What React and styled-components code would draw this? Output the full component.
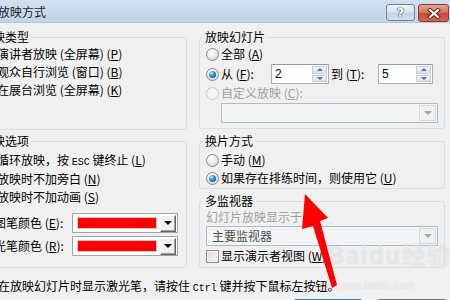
import * as React from 'react';
import styled, { createGlobalStyle } from 'styled-components';

const GlobalStyle = createGlobalStyle`
  html, body {
    margin: 0;
    padding: 0;
    background: #f0f0f0;
  }
  body {
    font-family: "Noto Sans CJK SC", "DejaVu Sans", sans-serif;
    font-size: 12px;
    color: #000;
  }
`;

const Screen = styled.div`
  position: relative;
  width: 450px;
  height: 300px;
  overflow: hidden;
  background: #f0f0f0;
`;

const Dialog = styled.div`
  width: 480px;
  margin-left: -30px;
  display: flex;
  flex-direction: column;
`;

const TitleBar = styled.div`
  height: 23px;
  box-sizing: border-box;
  display: flex;
  align-items: center;
  justify-content: space-between;
  padding: 0 1px 0 4px;
  background: linear-gradient(#d3e0f0, #c2d4ea);
  border-bottom: 1px solid #b6c7dc;
`;

const TitleText = styled.div`
  font-size: 12px;
  line-height: 14px;
  color: #1a1a1a;
  margin-top: 2px;
`;

const CaptionButtons = styled.div`
  display: flex;
  gap: 3px;
  align-self: flex-start;
  margin-top: 4px;
`;

const CaptionButton = styled.div`
  width: ${p => p.$w}px;
  height: ${p => p.$h}px;
  box-sizing: border-box;
  border-radius: 3px;
  border: 1px solid ${p => (p.$close ? '#8d3b30' : '#6e829c')};
  background: ${p =>
    p.$close
      ? 'linear-gradient(#e8a596, #d47462 45%, #c24a38 55%, #d06a52)'
      : 'linear-gradient(#eef3f9, #d9e4f1 45%, #c3d3e7 55%, #d3e0ee)'};
  display: flex;
  align-items: center;
  justify-content: center;
  font-family: "DejaVu Sans", sans-serif;
  font-weight: bold;
  font-size: 13px;
  color: #fff;
  text-shadow: 0 0 1px #34445a, 0 0 1px #34445a, 0 0 1px #34445a;
`;

const Body = styled.div`
  display: grid;
  grid-template-columns: 212px 246px;
  column-gap: 12px;
  padding: 7px 5px 0 5px;
`;

const Column = styled.div`
  display: flex;
  flex-direction: column;
  gap: ${p => p.$gap}px;
`;

const Group = styled.fieldset`
  margin: 0;
  min-width: 0;
  height: ${p => p.$h}px;
  box-sizing: border-box;
  border: 1px solid #d5dfe5;
  border-radius: 3px;
  padding: ${p => p.$top || 0}px 6px 0 6px;
  display: flex;
  flex-direction: column;
`;

const Legend = styled.legend`
  padding: 0 2px;
  margin-left: -3px;
  line-height: 14px;
  font-size: 12px;
`;

const Row = styled.div`
  display: flex;
  align-items: center;
  height: ${p => p.$h || 18}px;
  margin-top: ${p => p.$mt || 0}px;
  white-space: nowrap;
`;

const Label = styled.span`
  line-height: 14px;
  color: ${p => (p.$disabled ? '#a0a0a0' : '#000')};
  width: ${p => (p.$w ? `${p.$w}px` : 'auto')};
  margin-left: ${p => p.$ml || 0}px;
  flex: none;
`;

const Key = styled.u`
  text-decoration: underline;
`;

const Mono = styled.span`
  font-family: "Liberation Mono", monospace;
  font-size: 10px;
`;

const Radio = styled.span`
  flex: none;
  position: relative;
  width: 13px;
  height: 13px;
  box-sizing: border-box;
  margin-right: 2px;
  border-radius: 50%;
  border: 1px solid ${p => (p.$disabled ? '#c8c8c8' : '#8a8a8a')};
  background: ${p =>
    p.$disabled
      ? '#f4f4f4'
      : 'radial-gradient(circle at 40% 35%, #ffffff 0%, #ececec 45%, #cdcdcd 100%)'};
  &::after {
    content: '';
    display: ${p => (p.$checked ? 'block' : 'none')};
    position: absolute;
    left: 2px;
    top: 2px;
    width: 7px;
    height: 7px;
    border-radius: 50%;
    background: radial-gradient(circle at 35% 30%, #b9ecff 0%, #2a8ad8 45%, #0a4a92 100%);
  }
`;

const CheckBox = styled.span`
  flex: none;
  width: 13px;
  height: 13px;
  box-sizing: border-box;
  margin-right: 2px;
  border: 1px solid #8e8f8f;
  background: linear-gradient(135deg, #dcdcdc, #f7f7f7);
  box-shadow: inset 0 0 0 1px #f4f4f4;
`;

const SpinBox = styled.div`
  flex: none;
  display: flex;
  width: ${p => p.$w}px;
  height: 20px;
  box-sizing: border-box;
  border: 1px solid #abadb3;
  border-top-color: #8e9aab;
  background: #fff;
  padding: 1px;
`;

const SpinValue = styled.div`
  flex: 1;
  padding-left: 2px;
  font-family: "Liberation Sans", Arial, sans-serif;
  font-size: 12px;
  line-height: 16px;
`;

const SpinButtons = styled.div`
  width: 15px;
  display: flex;
  flex-direction: column;
  gap: 1px;
`;

const SpinPart = styled.div`
  flex: 1;
  box-sizing: border-box;
  border: 1px solid #c3cddb;
  background: linear-gradient(#f4f7fb, #dae3ee);
  display: flex;
  align-items: center;
  justify-content: center;
  &::before {
    content: '';
    border-left: 3px solid transparent;
    border-right: 3px solid transparent;
    ${p => (p.$down ? 'border-top: 3px solid #4f6c98;' : 'border-bottom: 3px solid #4f6c98;')}
  }
`;

const Combo = styled.div`
  display: flex;
  align-items: center;
  height: ${p => p.$h}px;
  box-sizing: border-box;
  margin-left: ${p => p.$indent || 0}px;
  margin-top: ${p => p.$mt || 0}px;
  border: 1px solid #a9bad1;
  background: #f4f4f4;
  padding: 1px;
`;

const ComboText = styled.div`
  flex: 1;
  padding-left: 4px;
  color: #4d4d4d;
  line-height: 14px;
`;

const ComboButton = styled.div`
  width: 17px;
  align-self: stretch;
  box-sizing: border-box;
  border: 1px solid #d3d9e0;
  background: #f1f1f1;
  display: flex;
  align-items: center;
  justify-content: center;
  &::before {
    content: '';
    border-left: 4px solid transparent;
    border-right: 4px solid transparent;
    border-top: 4px solid #a6a6a6;
  }
`;

const ColorRow = styled.div`
  display: flex;
  align-items: center;
  margin-top: ${p => p.$mt}px;
  white-space: nowrap;
`;

const ColorPicker = styled.div`
  display: flex;
  align-items: center;
  width: 106px;
  height: 20px;
  box-sizing: border-box;
  border: 1px solid #a3a3a3;
  background: #fff;
  padding: 0 1px 0 4px;
`;

const Swatch = styled.div`
  width: 80px;
  height: 12px;
  box-sizing: border-box;
  border: 1px solid #c9c9c9;
  background: ${p => p.$color};
`;

const PickerButton = styled.div`
  margin-left: 3px;
  width: 16px;
  height: 17px;
  box-sizing: border-box;
  border: 1px solid;
  border-color: #ffffff #646464 #646464 #ffffff;
  box-shadow: inset -1px -1px 0 #a0a0a0;
  background: #f0f0f0;
  display: flex;
  align-items: center;
  justify-content: center;
  &::before {
    content: '';
    border-left: 4px solid transparent;
    border-right: 4px solid transparent;
    border-top: 4px solid #000;
  }
`;

const Hint = styled.div`
  margin: 11px 0 0 28px;
  line-height: 14px;
  white-space: nowrap;
`;

const ButtonRow = styled.div`
  display: flex;
  justify-content: flex-end;
  gap: 14px;
  margin-top: 3px;
  padding-right: 3px;
`;

const PushButton = styled.div`
  width: 70px;
  height: 23px;
  box-sizing: border-box;
  border-radius: 3px;
  border: 1px solid ${p => (p.$default ? '#3c7fb1' : '#707070')};
  background: linear-gradient(#f2f2f2, #ebebeb 50%, #dddddd 50%, #cfcfcf);
  box-shadow: ${p => (p.$default ? 'inset 0 0 0 1px #48d3fb' : 'inset 0 0 0 1px #fcfcfc')};
`;

const Overlay = styled.svg`
  position: absolute;
  left: 0;
  top: 0;
  pointer-events: none;
`;

const Watermark = styled.div`
  position: absolute;
  left: ${p => p.$x}px;
  top: ${p => p.$y}px;
  font-family: ${p => (p.$small ? '"Liberation Sans", sans-serif' : '"Noto Sans CJK SC", sans-serif')};
  font-size: ${p => p.$size}px;
  font-weight: ${p => (p.$small ? 'normal' : 'bold')};
  color: rgba(255, 255, 255, 0.45);
  text-shadow: 0 0 1px rgba(160, 160, 160, 0.35);
  letter-spacing: ${p => (p.$small ? 0 : 1)}px;
  pointer-events: none;
  white-space: nowrap;
`;

const CloseGlyph = () => (
  <svg width="14" height="11" viewBox="0 0 14 11">
    <path d="M3 2 L11 9 M11 2 L3 9" stroke="#5a2820" strokeWidth="4" strokeLinecap="square" />
    <path d="M3 2 L11 9 M11 2 L3 9" stroke="#fff" strokeWidth="2" strokeLinecap="square" />
  </svg>
);

const Spin = ({ w, value }) => (
  <SpinBox $w={w}>
    <SpinValue>{value}</SpinValue>
    <SpinButtons>
      <SpinPart />
      <SpinPart $down />
    </SpinButtons>
  </SpinBox>
);

export default function App() {
  return (
    <Screen>
      <GlobalStyle />
      <Dialog>
        <TitleBar>
          <TitleText>设置放映方式</TitleText>
          <CaptionButtons>
            <CaptionButton $w={29} $h={17}>?</CaptionButton>
            <CaptionButton $w={31} $h={18} $close>
              <CloseGlyph />
            </CaptionButton>
          </CaptionButtons>
        </TitleBar>

        <Body>
          <Column $gap={4}>
            <Group $h={100} $top={1}>
              <Legend>放映类型</Legend>
              <Row>
                <Radio $checked />
                <Label>演讲者放映 (全屏幕) (<Key>P</Key>)</Label>
              </Row>
              <Row>
                <Radio />
                <Label>观众自行浏览 (窗口) (<Key>B</Key>)</Label>
              </Row>
              <Row>
                <Radio />
                <Label>在展台浏览 (全屏幕) (<Key>K</Key>)</Label>
              </Row>
            </Group>

            <Group $h={134} $top={4}>
              <Legend>放映选项</Legend>
              <Row>
                <CheckBox />
                <Label>循环放映，按 <Mono>ESC</Mono> 键终止 (<Key>L</Key>)</Label>
              </Row>
              <Row>
                <CheckBox />
                <Label>放映时不加旁白 (<Key>N</Key>)</Label>
              </Row>
              <Row>
                <CheckBox />
                <Label>放映时不加动画 (<Key>S</Key>)</Label>
              </Row>
              <ColorRow $mt={7}>
                <Label $w={90}>绘图笔颜色 (<Key>E</Key>):</Label>
                <ColorPicker>
                  <Swatch $color="#ff0000" />
                  <PickerButton />
                </ColorPicker>
              </ColorRow>
              <ColorRow $mt={3}>
                <Label $w={90}>激光笔颜色 (<Key>R</Key>):</Label>
                <ColorPicker>
                  <Swatch $color="#ff0000" />
                  <PickerButton />
                </ColorPicker>
              </ColorRow>
            </Group>
          </Column>

          <Column $gap={5}>
            <Group $h={99} $top={1}>
              <Legend>放映幻灯片</Legend>
              <Row>
                <Radio />
                <Label>全部 (<Key>A</Key>)</Label>
              </Row>
              <Row $h={20} $mt={1}>
                <Radio $checked />
                <Label $w={50}>从 (<Key>F</Key>):</Label>
                <Spin w={58} value="2" />
                <Label $w={47} $ml={2}>到 (<Key>T</Key>):</Label>
                <Spin w={55} value="5" />
              </Row>
              <Row>
                <Radio $disabled />
                <Label $disabled>自定义放映 (<Key>C</Key>):</Label>
              </Row>
              <Combo $h={20} $indent={15} $mt={1}>
                <ComboText />
                <ComboButton />
              </Combo>
            </Group>

            <Group $h={55} $top={3}>
              <Legend>换片方式</Legend>
              <Row>
                <Radio />
                <Label>手动 (<Key>M</Key>)</Label>
              </Row>
              <Row>
                <Radio $checked />
                <Label>如果存在排练时间，则使用它 (<Key>U</Key>)</Label>
              </Row>
            </Group>

            <Group $h={74} $top={2}>
              <Legend>多监视器</Legend>
              <Row $h={14}>
                <Label $disabled>幻灯片放映显示于</Label>
              </Row>
              <Combo $h={20} $mt={2}>
                <ComboText>主要监视器</ComboText>
                <ComboButton />
              </Combo>
              <Row $mt={1}>
                <CheckBox />
                <Label>显示演示者视图 (<Key>W</Key>)</Label>
              </Row>
            </Group>
          </Column>
        </Body>

        <Hint>
          在放映幻灯片时显示激光笔，请按住 <Mono>Ctrl</Mono> 键并按下鼠标左按钮。
        </Hint>
        <ButtonRow>
          <PushButton $default />
          <PushButton />
        </ButtonRow>
      </Dialog>

      <Watermark $x={328} $y={236} $size={24}>Baidu经验</Watermark>
      <Watermark $x={326} $y={279} $size={11} $small>jingyan.baidu.com</Watermark>

      <Overlay width="450" height="300" viewBox="0 0 450 300">
        <polygon
          points="305,194 328,218 320,221 337,285 332,288 313,226 302,229"
          fill="#ff0000"
        />
      </Overlay>
    </Screen>
  );
}
